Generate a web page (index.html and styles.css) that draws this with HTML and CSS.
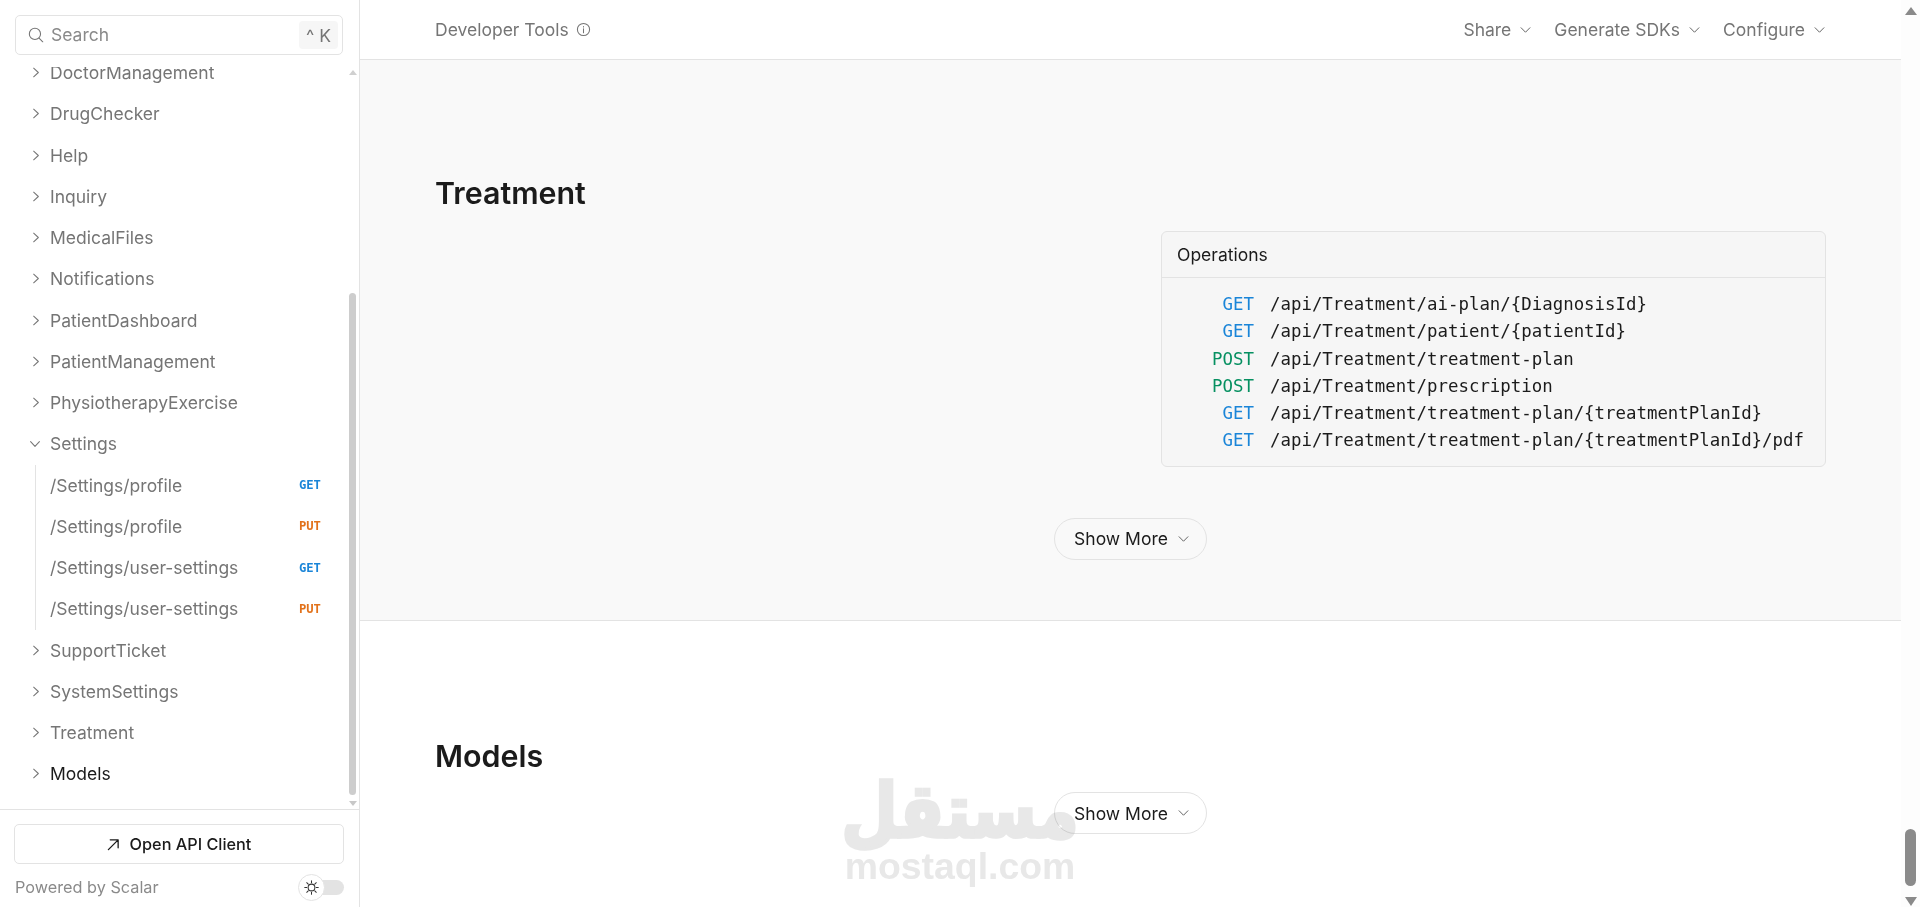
FILE: index.html
```html
<!DOCTYPE html>
<html lang="en">
<head>
<meta charset="utf-8">
<title>Scalar API Reference</title>
<link rel="stylesheet" href="styles.css">
</head>
<body>
<aside class="sidebar">
  <div class="search-wrap">
    <div class="search">
      <svg class="search-icon" viewBox="0 0 18 18"><circle cx="7.8" cy="7.8" r="6.3"/><path d="M12.4 12.4 16.6 16.6"/></svg>
      <span class="search-label">Search</span>
      <kbd class="shortcut">^ K</kbd>
    </div>
  </div>
  <div class="nav-area">
    <nav class="nav">
      <a class="row"><svg class="chev" viewBox="0 0 10 14"><path d="M2 1.5 8 7 2 12.5"/></svg>DoctorManagement</a>
      <a class="row"><svg class="chev" viewBox="0 0 10 14"><path d="M2 1.5 8 7 2 12.5"/></svg>DrugChecker</a>
      <a class="row"><svg class="chev" viewBox="0 0 10 14"><path d="M2 1.5 8 7 2 12.5"/></svg>Help</a>
      <a class="row"><svg class="chev" viewBox="0 0 10 14"><path d="M2 1.5 8 7 2 12.5"/></svg>Inquiry</a>
      <a class="row"><svg class="chev" viewBox="0 0 10 14"><path d="M2 1.5 8 7 2 12.5"/></svg>MedicalFiles</a>
      <a class="row"><svg class="chev" viewBox="0 0 10 14"><path d="M2 1.5 8 7 2 12.5"/></svg>Notifications</a>
      <a class="row"><svg class="chev" viewBox="0 0 10 14"><path d="M2 1.5 8 7 2 12.5"/></svg>PatientDashboard</a>
      <a class="row"><svg class="chev" viewBox="0 0 10 14"><path d="M2 1.5 8 7 2 12.5"/></svg>PatientManagement</a>
      <a class="row"><svg class="chev" viewBox="0 0 10 14"><path d="M2 1.5 8 7 2 12.5"/></svg>PhysiotherapyExercise</a>
      <a class="row"><svg class="chev chev-open" viewBox="0 0 14 10"><path d="M1.5 2 7 8 12.5 2"/></svg>Settings</a>
      <div class="children">
        <a class="row child"><span>/Settings/profile</span><span class="tag get">GET</span></a>
        <a class="row child"><span>/Settings/profile</span><span class="tag put">PUT</span></a>
        <a class="row child"><span>/Settings/user-settings</span><span class="tag get">GET</span></a>
        <a class="row child"><span>/Settings/user-settings</span><span class="tag put">PUT</span></a>
      </div>
      <a class="row"><svg class="chev" viewBox="0 0 10 14"><path d="M2 1.5 8 7 2 12.5"/></svg>SupportTicket</a>
      <a class="row"><svg class="chev" viewBox="0 0 10 14"><path d="M2 1.5 8 7 2 12.5"/></svg>SystemSettings</a>
      <a class="row"><svg class="chev" viewBox="0 0 10 14"><path d="M2 1.5 8 7 2 12.5"/></svg>Treatment</a>
      <a class="row active"><svg class="chev" viewBox="0 0 10 14"><path d="M2 1.5 8 7 2 12.5"/></svg>Models</a>
    </nav>
    <div class="side-scroll">
      <span class="arrow-up"></span>
      <span class="side-thumb"></span>
      <span class="arrow-down"></span>
    </div>
  </div>
  <footer class="side-foot">
    <button class="client-btn"><svg class="ne" viewBox="0 0 14 14"><path d="M1.5 12.5 12 2M3.5 2H12V10.5"/></svg>Open API Client</button>
    <div class="foot-line">
      <span class="powered">Powered by Scalar</span>
      <span class="toggle"><span class="knob"><svg viewBox="0 0 16 16"><circle cx="8" cy="8" r="3.6"/><path d="M8 .8V3M8 13v2.2M.8 8H3M13 8h2.2M2.9 2.9 4.5 4.5M11.5 11.5l1.6 1.6M2.9 13.1l1.6-1.6M11.5 4.5l1.6-1.6"/></svg></span></span>
    </div>
  </footer>
</aside>

<div class="page">
  <header class="topbar">
    <div class="top-title">Developer Tools
      <svg class="info" viewBox="0 0 16 16"><circle cx="8" cy="8" r="6.5"/><path d="M8 7.2V11.4M8 4.7V5.3"/></svg>
    </div>
    <div class="top-menu">
      <span class="menu-item">Share<svg class="down" viewBox="0 0 14 10"><path d="M1.5 2.2 7 7.8 12.5 2.2"/></svg></span>
      <span class="menu-item">Generate SDKs<svg class="down" viewBox="0 0 14 10"><path d="M1.5 2.2 7 7.8 12.5 2.2"/></svg></span>
      <span class="menu-item">Configure<svg class="down" viewBox="0 0 14 10"><path d="M1.5 2.2 7 7.8 12.5 2.2"/></svg></span>
    </div>
  </header>
  <main class="content">
    <section class="section tinted">
      <h2 class="heading">Treatment</h2>
      <div class="ops-grid">
        <div class="card">
          <div class="card-head">Operations</div>
          <div class="card-body">
            <div class="op"><span class="verb get">GET</span><span>/api/Treatment/ai-plan/{DiagnosisId}</span></div>
            <div class="op"><span class="verb get">GET</span><span>/api/Treatment/patient/{patientId}</span></div>
            <div class="op"><span class="verb post">POST</span><span>/api/Treatment/treatment-plan</span></div>
            <div class="op"><span class="verb post">POST</span><span>/api/Treatment/prescription</span></div>
            <div class="op"><span class="verb get">GET</span><span>/api/Treatment/treatment-plan/{treatmentPlanId}</span></div>
            <div class="op"><span class="verb get">GET</span><span>/api/Treatment/treatment-plan/{treatmentPlanId}/pdf</span></div>
          </div>
        </div>
      </div>
      <div class="more-line"><button class="more">Show More<svg class="down" viewBox="0 0 14 10"><path d="M1.5 2.2 7 7.8 12.5 2.2"/></svg></button></div>
    </section>
    <section class="section plain">
      <h2 class="heading">Models</h2>
      <div class="more-line models-more"><button class="more">Show More<svg class="down" viewBox="0 0 14 10"><path d="M1.5 2.2 7 7.8 12.5 2.2"/></svg></button></div>
    </section>
  </main>
</div>

<div class="page-scroll">
  <span class="arrow-up dark"></span>
  <span class="page-thumb"></span>
  <span class="arrow-down dark"></span>
</div>

<div class="watermark">
  <span class="wm-ar" lang="ar" dir="rtl">مستقل</span>
  <span class="wm-en">mostaql.com</span>
</div>
</body>
</html>
```
FILE: styles.css
```css
* { box-sizing: border-box; }
html, body { height: 100%; }
body {
  margin: 0;
  height: 907px;
  overflow: hidden;
  display: flex;
  font-family: Inter, "Liberation Sans", sans-serif;
  font-size: 17.5px;
  color: #1b1b1b;
  background: #fff;
}
svg { fill: none; stroke: currentColor; stroke-linecap: round; stroke-linejoin: round; display: block; }

/* sidebar */
.sidebar {
  width: 360px;
  flex: none;
  height: 100%;
  display: flex;
  flex-direction: column;
  border-right: 1px solid #e3e3e3;
}
.search-wrap { padding: 15px 16px 12px 15px; flex: none; background: #fff; position: relative; z-index: 1; }
.search {
  height: 40px;
  display: flex;
  align-items: center;
  border: 1px solid #e3e3e3;
  border-radius: 5px;
  padding: 0 4px 0 12px;
  color: #757575;
}
.search-icon { width: 16px; height: 16px; stroke-width: 1.2; margin-right: 7px; color: #757575; }
.search-label { flex: 1; font-size: 17.5px; color: #8a8a8a; margin-top: -2px; }
.shortcut {
  width: 39px;
  height: 28px;
  background: #f6f6f6;
  border-radius: 4px;
  font: inherit;
  font-size: 17.5px;
  color: #757575;
  display: flex;
  align-items: center;
  justify-content: center;
}
.nav-area { flex: 1; min-height: 0; display: flex; overflow: hidden; }
.nav { flex: 1; min-width: 0; margin-top: -15px; padding: 0 0 0 32px; }
.row {
  height: 41.25px;
  display: flex;
  align-items: center;
  color: #757575;
  white-space: nowrap;
  font-size: 17.5px;
}
.row.active { color: #1b1b1b; }
.chev { width: 8px; height: 11px; stroke-width: 1.3; color: #757575; margin-right: 10px; flex: none; }
.chev-open { width: 12px; height: 8px; margin-left: -3px; margin-right: 9px; }
.children {
  margin-left: 3px;
  padding-left: 14px;
  border-left: 1px solid #e3e3e3;
  padding-right: 24px;
}
.child { justify-content: space-between; padding-right: 1px; }
.tag {
  font-family: "DejaVu Sans Mono", "Liberation Mono", monospace;
  font-weight: 700;
  font-size: 12.2px;
  width: 22px;
  letter-spacing: -.1px;
}
.get { color: #1a85d8; }
.put { color: #e2721b; }
.post { color: #069061; }

.side-scroll {
  width: 13px;
  flex: none;
  display: flex;
  flex-direction: column;
  align-items: center;
  padding: 3px 0 3px;
}
.arrow-up, .arrow-down { width: 0; height: 0; border-left: 4px solid transparent; border-right: 4px solid transparent; flex: none; }
.arrow-up { border-bottom: 5px solid #d0d0d0; }
.arrow-down { border-top: 5px solid #c8c8c8; }
.side-thumb { width: 7px; flex: 1; margin-top: 218px; margin-bottom: 6px; background: #cdcdcd; border-radius: 4px; }

.side-foot {
  flex: none;
  border-top: 1px solid #e3e3e3;
  padding: 14px 15px 12px 14px;
  height: 98px;
}
.client-btn {
  width: 100%;
  height: 40px;
  display: flex;
  align-items: center;
  justify-content: center;
  gap: 10px;
  background: #fff;
  border: 1px solid #e3e3e3;
  border-radius: 5px;
  font: inherit;
  font-size: 16.25px;
  font-weight: 500;
  color: #1b1b1b;
}
.ne { width: 13px; height: 13px; stroke-width: 1.4; }
.foot-line { display: flex; justify-content: space-between; align-items: center; margin-top: 13px; padding-left: 1px; }
.powered { font-size: 16.25px; color: #8a8a8a; }
.toggle { width: 36px; height: 15px; border-radius: 8px; background: #e3e3e3; display: flex; align-items: center; }
.knob {
  width: 27px; height: 27px; border-radius: 50%;
  background: #fff; border: 1px solid #e3e3e3;
  display: flex; align-items: center; justify-content: center;
  margin-left: -10px;
  flex: none;
}
.knob svg { width: 15px; height: 15px; stroke-width: 1.1; color: #333; }

/* main */
.page { flex: 1; min-width: 0; display: flex; flex-direction: column; height: 100%; }
.topbar {
  height: 60px;
  flex: none;
  border-bottom: 1px solid #e3e3e3;
  display: flex;
  align-items: center;
  justify-content: space-between;
  padding: 0 75px 0 75px;
  color: #757575;
  font-size: 17.5px;
  background: #fff;
}
.top-title { display: flex; align-items: center; gap: 7px; }
.info { width: 15px; height: 15px; stroke-width: 1.1; }
.top-menu { display: flex; gap: 22px; }
.menu-item { display: flex; align-items: center; gap: 8px; }
.down { width: 13px; height: 8px; stroke-width: 1.25; color: #666; flex: none; }
.content { flex: 1; min-height: 0; overflow: hidden; }
.section { padding: 0 75px; }
.tinted { height: 561px; background: #f9f9f9; border-bottom: 1px solid #e3e3e3; padding-top: 112px; }
.plain { background: #fff; padding-top: 114px; }
.heading { margin: 0; font-size: 30.4px; line-height: 42px; font-weight: 600; color: #1b1b1b; }
.ops-grid { display: flex; justify-content: flex-end; margin-top: 17px; }
.card {
  width: 665px;
  background: #f6f6f6;
  border: 1px solid #e3e3e3;
  border-radius: 6px;
}
.card-head { height: 46px; padding-left: 15px; display: flex; align-items: center; border-bottom: 1px solid #e3e3e3; font-weight: 400; font-size: 17.5px; }
.card-body { padding: 13px 0 11px; font-family: "DejaVu Sans Mono", "Liberation Mono", monospace; font-size: 17.4px; line-height: 27.25px; color: #1b1b1b; }
.op { display: flex; gap: 16px; white-space: nowrap; }
.verb { width: 92px; text-align: right; flex: none; }
.more-line { display: flex; justify-content: center; margin-top: 51px; }
.models-more { margin-top: 15px; }
.more {
  width: 153px;
  height: 42px;
  border: 1px solid #e3e3e3;
  border-radius: 21px;
  background: transparent;
  font: inherit;
  font-weight: 400;
  font-size: 17.5px;
  color: #1b1b1b;
  display: flex;
  align-items: center;
  justify-content: center;
  gap: 9px;
  padding: 0 0 0 3px;
  position: relative;
  z-index: 3;
}

/* page scrollbar */
.page-scroll {
  width: 19px;
  flex: none;
  background: #fdfdfd;
  display: flex;
  flex-direction: column;
  align-items: center;
  padding: 7px 0 1px;
}
.arrow-up.dark { border-left-width: 6.5px; border-right-width: 6.5px; border-bottom: 8px solid #8a8a8a; }
.arrow-down.dark { border-left-width: 6.5px; border-right-width: 6.5px; border-top: 9px solid #8a8a8a; }
.page-thumb { width: 11px; height: 57px; margin-top: auto; margin-bottom: 11px; background: #8a8a8a; border-radius: 6px; }

/* watermark */
.watermark {
  position: absolute;
  left: 845px;
  top: 777px;
  width: 230px;
  display: flex;
  flex-direction: column;
  align-items: center;
  color: #e8e8e8;
  pointer-events: none;
  z-index: 4;
  mix-blend-mode: multiply;
}
.wm-ar {
  font-family: "DejaVu Sans", sans-serif;
  font-weight: 700;
  font-size: 65px;
  line-height: 69px;
  -webkit-text-stroke: 3px #e8e8e8;
  transform: scaleY(1.15);
}
.wm-en { font-family: "Liberation Sans", sans-serif; font-weight: 700; font-size: 37.4px; line-height: 40px; }
```
